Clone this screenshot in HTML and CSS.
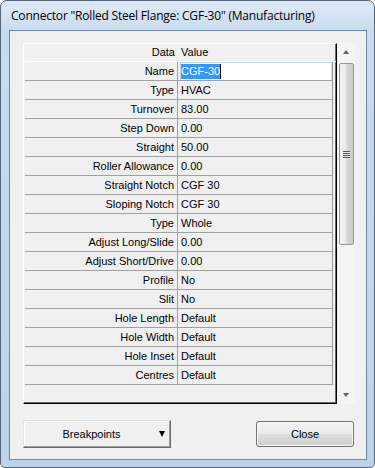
FILE: index.html
```html
<!DOCTYPE html>
<html lang="en">
<head>
    <meta charset="UTF-8">
    <title>Connector</title>
    <link rel="stylesheet" href="styles.css">
</head>
<body>
<div class="window">
    <div class="titlebar">Connector "Rolled Steel Flange: CGF-30" (Manufacturing)</div>
    <div class="client">
        <div class="propgrid">
            <div class="grid">
                <div class="row head"><div class="cell label">Data</div><div class="cell value">Value</div></div>
                <div class="row"><div class="cell label">Name</div><div class="cell value edit"><span class="editor"><span class="sel">CGF-30</span><span class="caret"></span></span></div></div>
                <div class="row"><div class="cell label">Type</div><div class="cell value">HVAC</div></div>
                <div class="row"><div class="cell label">Turnover</div><div class="cell value">83.00</div></div>
                <div class="row"><div class="cell label">Step Down</div><div class="cell value">0.00</div></div>
                <div class="row"><div class="cell label">Straight</div><div class="cell value">50.00</div></div>
                <div class="row"><div class="cell label">Roller Allowance</div><div class="cell value">0.00</div></div>
                <div class="row"><div class="cell label">Straight Notch</div><div class="cell value">CGF 30</div></div>
                <div class="row"><div class="cell label">Sloping Notch</div><div class="cell value">CGF 30</div></div>
                <div class="row"><div class="cell label">Type</div><div class="cell value">Whole</div></div>
                <div class="row"><div class="cell label">Adjust Long/Slide</div><div class="cell value">0.00</div></div>
                <div class="row"><div class="cell label">Adjust Short/Drive</div><div class="cell value">0.00</div></div>
                <div class="row"><div class="cell label">Profile</div><div class="cell value">No</div></div>
                <div class="row"><div class="cell label">Slit</div><div class="cell value">No</div></div>
                <div class="row"><div class="cell label">Hole Length</div><div class="cell value">Default</div></div>
                <div class="row"><div class="cell label">Hole Width</div><div class="cell value">Default</div></div>
                <div class="row"><div class="cell label">Hole Inset</div><div class="cell value">Default</div></div>
                <div class="row"><div class="cell label">Centres</div><div class="cell value">Default</div></div>
            </div>
            <div class="scrollbar">
                <div class="arrow up"></div>
                <div class="track"><div class="thumb"><div class="grip"></div></div></div>
                <div class="arrow down"></div>
            </div>
        </div>
        <div class="buttons">
            <button class="btn-split"><span class="btn-text">Breakpoints</span><span class="drop"></span></button>
            <button class="btn-close">Close</button>
        </div>
    </div>
</div>
</body>
</html>
```

FILE: styles.css
```css
html, body {
    margin: 0;
    padding: 0;
}
body {
    width: 375px;
    height: 468px;
    background: #ffffff;
    font-family: "Liberation Sans", Arial, sans-serif;
    font-size: 11px;
    color: #000;
}
.window {
    box-sizing: border-box;
    width: 375px;
    height: 468px;
    border: 1px solid #55657a;
    border-radius: 7px 7px 5px 5px;
    background: linear-gradient(#dfeaf6 0, #c9dcf0 30px, #bcd3ec 100%);
    padding: 0 7px 7px 8px;
    display: flex;
    flex-direction: column;
}
.titlebar {
    height: 29px;
    line-height: 30px;
    padding-left: 2px;
    font-family: "Open Sans", "Noto Sans", sans-serif;
    font-size: 12px;
    letter-spacing: -0.2px;
    white-space: nowrap;
    color: #000;
}
.client {
    flex: 1;
    background: #f0f0f0;
    border: 1px solid #6f85a3;
    padding: 12px 0 0 13px;
    display: flex;
    flex-direction: column;
}
.propgrid {
    display: flex;
    width: 332px;
    height: 361px;
}
.grid {
    box-sizing: border-box;
    width: 314px;
    height: 361px;
    border-top: 1px solid #ffffff;
    border-left: 1px solid #ffffff;
    border-right: 1px solid #000;
    border-bottom: 1px solid #000;
    box-shadow: inset -1px -1px 0 #696969;
    padding-left: 1px;
}
.row {
    display: grid;
    grid-template-columns: 153px 155px;
    height: 19px;
}
.cell {
    box-sizing: border-box;
    height: 19px;
    line-height: 18px;
    border-right: 1px solid #a0a0a0;
    border-bottom: 1px solid #a0a0a0;
    white-space: nowrap;
    overflow: hidden;
}
.label {
    text-align: right;
    padding-right: 3px;
}
.value {
    padding-left: 3px;
}
.row.head {
    height: 18px;
    border-bottom: 1px solid #ffffff;
    box-sizing: border-box;
}
.row.head .cell {
    border: none;
    height: 17px;
    line-height: 17px;
}
.value.edit {
    padding-left: 2px;
}
.editor {
    display: flex;
    align-items: center;
    box-sizing: border-box;
    width: 152px;
    height: 19px;
    background: #ffffff;
    border: 1px solid #c3d6ec;
}
.sel {
    background: #3399ff;
    color: #ffffff;
    line-height: 15px;
}
.caret {
    width: 1px;
    height: 15px;
    background: #000;
}
.scrollbar {
    margin-left: 1px;
    width: 17px;
    height: 361px;
    background: #f4f4f4;
    display: flex;
    flex-direction: column;
}
.arrow {
    height: 17px;
    position: relative;
}
.arrow::after {
    content: "";
    position: absolute;
    left: 5px;
    top: 7px;
    border-left: 3.5px solid transparent;
    border-right: 3.5px solid transparent;
}
.arrow.up::after {
    border-bottom: 4px solid #606060;
}
.arrow.down::after {
    top: 6px;
    border-top: 4px solid #606060;
}
.track {
    flex: 1;
    padding: 3px 1px 0 1px;
}
.thumb {
    box-sizing: border-box;
    height: 182px;
    border: 1px solid #979797;
    border-radius: 2px;
    background: linear-gradient(to right, #f4f4f4 0, #e9e9e9 45%, #d6d6d6 55%, #cbcbcb 100%);
    display: flex;
    align-items: center;
    justify-content: center;
}
.grip {
    width: 7px;
    height: 7px;
    background: repeating-linear-gradient(#555 0, #555 1px, #eaeaea 1px, #eaeaea 2px);
}
.buttons {
    margin-top: 16px;
    width: 331px;
    display: flex;
    justify-content: space-between;
    align-items: flex-start;
}
button {
    margin: 0;
    padding: 0;
    font-family: "Liberation Sans", Arial, sans-serif;
    font-size: 11px;
    color: #000;
}
.btn-split {
    box-sizing: border-box;
    width: 148px;
    height: 28px;
    background: #f0f0f0;
    border: 1px solid;
    border-color: #e3e3e3 #696969 #696969 #e3e3e3;
    box-shadow: inset -1px -1px 0 #a0a0a0, inset 1px 1px 0 #ffffff;
    display: flex;
    align-items: center;
}
.btn-text {
    flex: 1;
    text-align: center;
}
.drop {
    margin-right: 5px;
    width: 0;
    height: 0;
    border-left: 3.5px solid transparent;
    border-right: 3.5px solid transparent;
    border-top: 6px solid #000;
}
.btn-close {
    box-sizing: border-box;
    margin-top: 1px;
    width: 98px;
    height: 26px;
    border: 1px solid #707070;
    border-radius: 3px;
    background: linear-gradient(#f2f2f2 0, #ebebeb 50%, #dddddd 50%, #cfcfcf 100%);
    box-shadow: inset 0 0 0 1px #fbfbfb;
}
```
